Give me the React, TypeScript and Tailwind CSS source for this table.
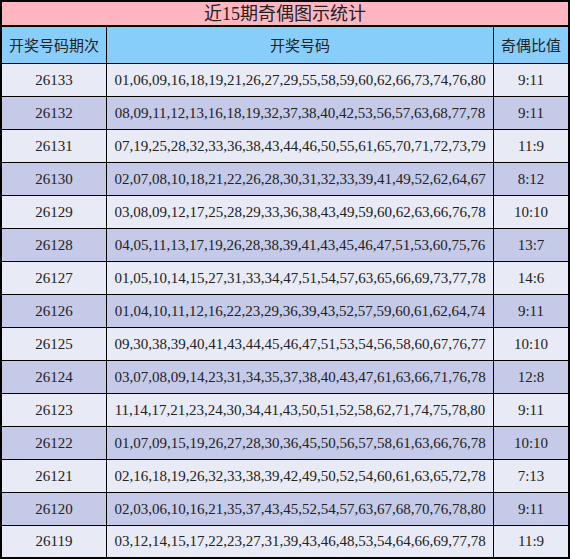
const rows: [string, string, string][] = [
  ['26133', '01,06,09,16,18,19,21,26,27,29,55,58,59,60,62,66,73,74,76,80', '9:11'],
  ['26132', '08,09,11,12,13,16,18,19,32,37,38,40,42,53,56,57,63,68,77,78', '9:11'],
  ['26131', '07,19,25,28,32,33,36,38,43,44,46,50,55,61,65,70,71,72,73,79', '11:9'],
  ['26130', '02,07,08,10,18,21,22,26,28,30,31,32,33,39,41,49,52,62,64,67', '8:12'],
  ['26129', '03,08,09,12,17,25,28,29,33,36,38,43,49,59,60,62,63,66,76,78', '10:10'],
  ['26128', '04,05,11,13,17,19,26,28,38,39,41,43,45,46,47,51,53,60,75,76', '13:7'],
  ['26127', '01,05,10,14,15,27,31,33,34,47,51,54,57,63,65,66,69,73,77,78', '14:6'],
  ['26126', '01,04,10,11,12,16,22,23,29,36,39,43,52,57,59,60,61,62,64,74', '9:11'],
  ['26125', '09,30,38,39,40,41,43,44,45,46,47,51,53,54,56,58,60,67,76,77', '10:10'],
  ['26124', '03,07,08,09,14,23,31,34,35,37,38,40,43,47,61,63,66,71,76,78', '12:8'],
  ['26123', '11,14,17,21,23,24,30,34,41,43,50,51,52,58,62,71,74,75,78,80', '9:11'],
  ['26122', '01,07,09,15,19,26,27,28,30,36,45,50,56,57,58,61,63,66,76,78', '10:10'],
  ['26121', '02,16,18,19,26,32,33,38,39,42,49,50,52,54,60,61,63,65,72,78', '7:13'],
  ['26120', '02,03,06,10,16,21,35,37,43,45,52,54,57,63,67,68,70,76,78,80', '9:11'],
  ['26119', '03,12,14,15,17,22,23,27,31,39,43,46,48,53,54,64,66,69,77,78', '11:9'],
];

export default function App() {
  return (
    <div className="w-[570px] h-[559px] border-2 border-black bg-white flex flex-col font-['Liberation_Serif','Noto_Sans_CJK_SC',serif] text-[#222]">
      <div className="h-[25px] shrink-0 border-b-2 border-black bg-[#ffb6c1] flex items-center justify-center text-[18px] leading-none">
        近15期奇偶图示统计
      </div>
      <div className="grid grid-cols-[104px_1px_386px_1px_74px] h-[37px] shrink-0 border-b border-black bg-[#87cefa] text-[15px] font-['Noto_Sans_CJK_SC',sans-serif]">
        <div className="flex items-center justify-center">开奖号码期次</div>
        <div className="bg-black" />
        <div className="flex items-center justify-center">开奖号码</div>
        <div className="bg-black" />
        <div className="flex items-center justify-center">奇偶比值</div>
      </div>
      {rows.map(([id, nums, ratio], i) => (
        <div
          key={id}
          className={`grid grid-cols-[104px_1px_386px_1px_74px] text-[15px] ${
            i === rows.length - 1 ? 'flex-1' : 'h-[33px] shrink-0 border-b border-black'
          } ${i % 2 === 0 ? 'bg-[#e8eaf6]' : 'bg-[#c5cae9]'}`}
        >
          <div className="flex items-center justify-center">{id}</div>
          <div className="bg-black" />
          <div className="flex items-center justify-center">{nums}</div>
          <div className="bg-black" />
          <div className="flex items-center justify-center">{ratio}</div>
        </div>
      ))}
    </div>
  );
}
